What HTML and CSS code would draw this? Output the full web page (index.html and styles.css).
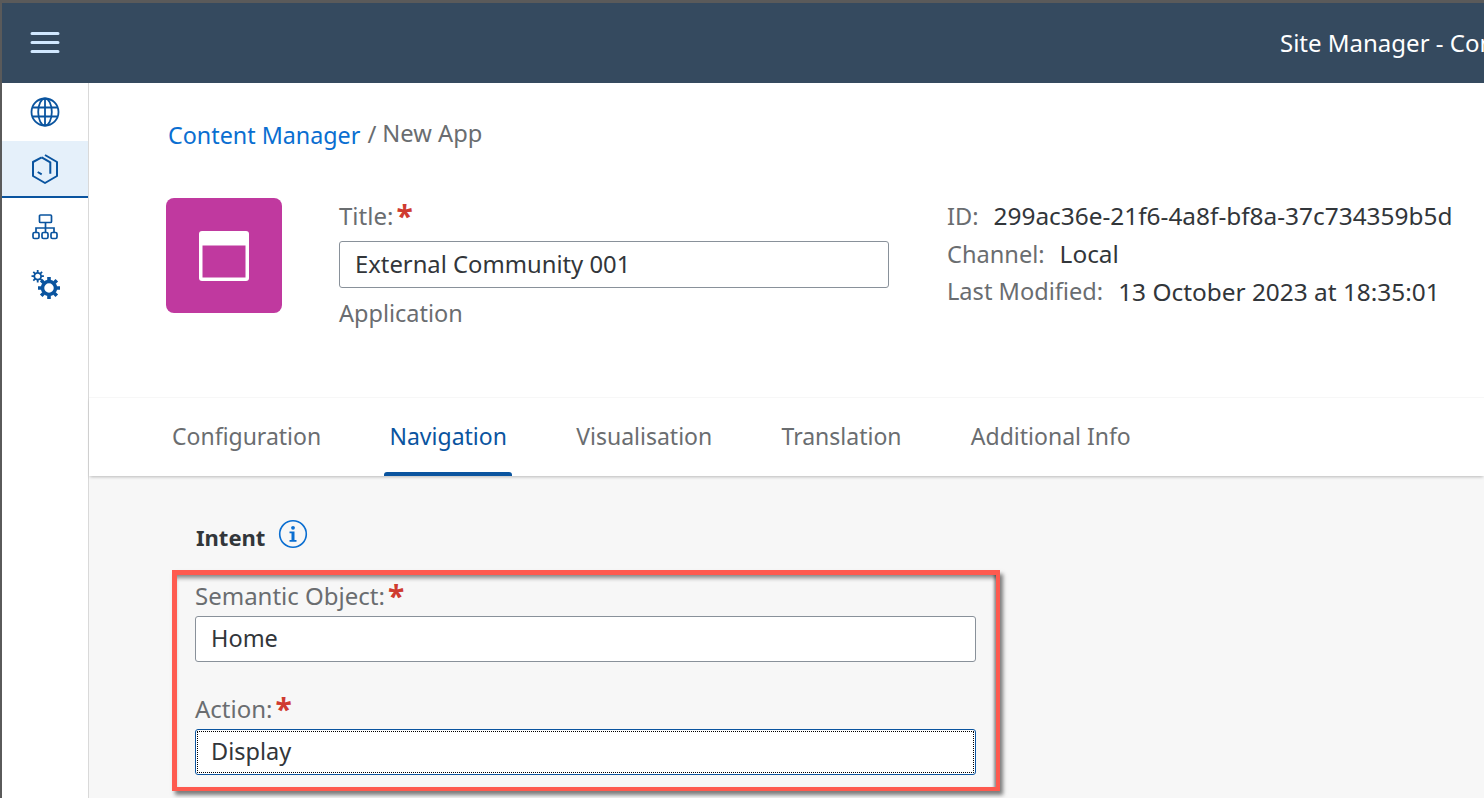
FILE: index.html
```html
<!DOCTYPE html>
<html lang="en">

<head>
	<meta charset="UTF-8">
	<title>Site Manager - Content Manager</title>
	<link rel="stylesheet" href="styles.css">
</head>

<body>
	<header class="shell">
		<button class="menu-btn" aria-label="Menu">
			<svg width="30" height="24" viewBox="0 0 30 24"><path d="M2 3.500h26M2 12.500h26M2 21.500h26" stroke="#d1e8ff" stroke-width="3" stroke-linecap="round" fill="none"/></svg>
		</button>
		<div class="shell-title">Site Manager - Content Manager</div>
	</header>

	<div class="main">
		<nav class="side">
			<a class="side-item first">
				<svg width="30" height="30" viewBox="0 0 30 30" fill="none" stroke="#0a549f" stroke-width="1.800"><circle cx="15" cy="15" r="13.500"/><ellipse cx="15" cy="15" rx="6.800" ry="13.500"/><path d="M15 1.500v27M2.500 10.500h25M2.500 19.500h25"/></svg>
			</a>
			<a class="side-item active">
				<svg width="26" height="30" viewBox="0 0 26 30" fill="none" stroke="#0a549f" stroke-width="2" stroke-linejoin="round"><path d="M9.700 3.300 1 8v14l12 7 12-7V8L13 1"/><path d="M9.700 3.300 18.300 8.300v11.400"/><path d="M5.700 18l4 2.300"/></svg>
			</a>
			<a class="side-item">
				<svg width="26" height="26" viewBox="0 0 26 26" fill="none" stroke="#0a549f" stroke-width="1.700"><rect x="7.500" y="1" width="12" height="7.500" rx="1"/><path d="M13.500 8.500v10M4 18.500v-4.500h18v4.500"/><rect x="1" y="18.500" width="6" height="6" rx="1.500"/><rect x="10" y="18.500" width="6" height="6" rx="1.500"/><rect x="19" y="18.500" width="6" height="6" rx="1.500"/></svg>
			</a>
			<a class="side-item">
				<svg width="32" height="32" viewBox="0 0 32 32" fill="none" stroke="#0a549f"><circle cx="20" cy="20" r="6.500" stroke-width="3.500"/><path d="M20 9v3.500M20 27.500V31M9 20h3.500M27.500 20H31M12.200 12.200l2.500 2.500M25.300 25.300l2.500 2.500M12.200 27.800l2.500-2.500M25.300 14.700l2.500-2.500" stroke-width="3.600"/><circle cx="8.700" cy="8.200" r="3.400" stroke-width="1.800"/><path d="M8.700 2v2.800M8.700 11.600v2.800M2.500 8.200h2.800M12.100 8.200h2.800M4.300 3.800l2 2M11.100 10.600l2 2M4.300 12.600l2-2M11.100 5.800l2-2" stroke-width="1.800"/></svg>
			</a>
		</nav>

		<div class="content">
			<section class="head">
				<div class="crumbs"><a class="crumb-link">Content Manager</a><span class="crumb-sep">/</span><span class="crumb-cur">New App</span></div>
				<div class="app-row">
					<div class="app-tile">
						<svg width="52" height="52" viewBox="0 0 52 52"><rect x="1" y="1" width="50" height="50" rx="3" fill="#fff"/><rect x="4.500" y="15.500" width="43" height="32" fill="#c0399f"/></svg>
					</div>
					<div class="app-form">
						<label class="lbl title-lbl">Title:<span class="req">*</span></label>
						<div class="inp title-inp">External Community 001</div>
						<div class="app-type">Application</div>
					</div>
					<dl class="meta">
						<div class="meta-row"><dt>ID:</dt><dd>299ac36e-21f6-4a8f-bf8a-37c734359b5d</dd></div>
						<div class="meta-row"><dt>Channel:</dt><dd>Local</dd></div>
						<div class="meta-row"><dt>Last Modified:</dt><dd>13 October 2023 at 18:35:01</dd></div>
					</dl>
				</div>
			</section>

			<div class="tabs">
				<a class="tab">Configuration</a>
				<a class="tab active">Navigation</a>
				<a class="tab">Visualisation</a>
				<a class="tab">Translation</a>
				<a class="tab">Additional Info</a>
			</div>

			<section class="body">
				<h2 class="intent">Intent
					<svg width="30" height="30" viewBox="0 0 30 30"><circle cx="15" cy="15" r="13.300" fill="none" stroke="#0a6ed1" stroke-width="1.600"/><circle cx="15" cy="8.800" r="1.900" fill="#0a6ed1"/><path d="M11.500 12.500h5v8.500h2v1.800h-7V21h2v-6.700h-2z" fill="#0a6ed1"/></svg>
				</h2>
				<div class="marked">
					<label class="lbl">Semantic Object:<span class="req">*</span></label>
					<div class="inp">Home</div>
					<label class="lbl second">Action:<span class="req">*</span></label>
					<div class="inp focused">Display</div>
				</div>
			</section>
		</div>
	</div>
</body>

</html>
```
FILE: styles.css
```css
*,
*::before,
*::after {
	box-sizing: border-box;
}

html, body {
	margin: 0;
	height: 100%;
	overflow: hidden;
}

body {
	font-family: "Noto Sans", Arial, sans-serif;
	font-size: 24px;
	color: #32363a;
	background: #fff;
	border-top: 3px solid #5a5a5a;
	border-left: 2px solid #5a5a5a;
	display: flex;
	flex-direction: column;
}

.shell {
	height: 80px;
	flex: none;
	background: #354a5f;
	display: flex;
	align-items: center;
	padding-left: 28px;
	overflow: hidden;
	white-space: nowrap;
}

.menu-btn {
	background: none;
	border: 0;
	padding: 0;
	width: 30px;
	height: 24px;
	margin-bottom: 3px;
}

.shell-title {
	color: #fff;
	margin-left: 1220px;
	margin-bottom: 2px;
}

.main {
	flex: 1;
	display: flex;
	min-height: 0;
}

.side {
	width: 87px;
	flex: none;
	border-right: 1px solid #d9d9d9;
}

.side-item {
	height: 57px;
	display: flex;
	align-items: center;
	justify-content: center;
}

.side-item.first {
	height: 58px;
}

.side-item.active {
	background: #e5f0fa;
	border-bottom: 2px solid #0a549f;
}

.content {
	flex: 1;
	min-width: 0;
	display: flex;
	flex-direction: column;
}

.head {
	height: 314px;
	padding: 35px 0 0 77px;
}

.crumbs {
	height: 34px;
	margin-left: 2px;
	line-height: 30px;
}

.crumb-link {
	color: #0a6ed1;
	font-size: 23.300px;
}

.crumb-sep {
	color: #6a6d70;
	margin: 0 6px 0 7px;
	vertical-align: 1px;
}

.crumb-cur {
	color: #6a6d70;
	font-size: 23.700px;
	vertical-align: 2px;
}

.app-row {
	display: flex;
	margin-top: 46px;
}

.app-tile {
	width: 116px;
	height: 115px;
	border-radius: 8px;
	background: #c0399f;
	display: flex;
	align-items: center;
	justify-content: center;
	flex: none;
}

.app-form {
	width: 550px;
	margin-left: 57px;
}

.lbl {
	display: block;
	color: #6a6d70;
	height: 38px;
	line-height: 36px;
}

.title-lbl {
	height: 43px;
}

.req {
	color: #cf3b30;
	font-weight: 700;
	margin-left: 3px;
	font-size: 30px;
	line-height: 20px;
	vertical-align: -2px;
}

.inp {
	height: 46px;
	line-height: 42px;
	padding: 0 15px;
	background: #fff;
	border: 1px solid #89919a;
	border-radius: 3px;
	color: #32363a;
	font-size: 23.500px;
}

.title-inp {
	height: 47px;
	line-height: 44px;
	font-size: 23.800px;
}

.app-type {
	color: #6a6d70;
	margin-top: 9px;
	font-size: 23.500px;
}

.meta {
	margin: -1px 0 0 58px;
	white-space: nowrap;
}

.meta-row {
	display: flex;
	height: 37.700px;
	align-items: center;
}

.meta dt {
	color: #6a6d70;
	margin-right: 15px;
	font-size: 23.600px;
}

.meta dd {
	margin: 0;
	font-size: 24.400px;
}

.tabs {
	height: 79px;
	flex: none;
	display: flex;
	padding-left: 78px;
	gap: 58.300px;
	background: #fff;
	border-top: 1px solid #f7f7f7;
	box-shadow: 0 2px 3px -1px rgba(0, 0, 0, .25);
	position: relative;
}

.tab {
	color: #6a6d70;
	padding: 22px 6px 0 5px;
	height: 78px;
	font-size: 23px;
}

.tab.active {
	color: #0a549f;
	position: relative;
	margin: 0 1px 0 -1px;
	padding-right: 5px;
}

.tab.active::after {
	content: "";
	position: absolute;
	left: 0;
	right: 0;
	bottom: 0;
	height: 4px;
	background: #0a549f;
	border-radius: 3px 3px 0 0;
}

.body {
	flex: 1;
	background: #f7f7f7;
	padding: 44px 0 0 83px;
}

.intent {
	margin: 0;
	font-size: 22px;
	font-weight: 700;
	display: flex;
	align-items: center;
	gap: 13px;
	padding-left: 24px;
	height: 34px;
}

.intent svg {
	margin-bottom: 6px;
}

.marked {
	width: 828px;
	height: 221px;
	margin-top: 16px;
	border: 4px solid #fe5a4f;
	border-top-width: 5px;
	border-left-width: 5px;
	padding: 3px 20px 0 18px;
	box-shadow: 3px 4px 4px rgba(0, 0, 0, .5), inset 0 5px 4px -2px rgba(0, 0, 0, .45), inset -4px 0 3px -2px rgba(0, 0, 0, .4);
}

.second {
	margin-top: 29px;
}

.focused {
	border-color: #0a549f;
	outline: 1px dotted #000;
	outline-offset: -3px;
}
```
